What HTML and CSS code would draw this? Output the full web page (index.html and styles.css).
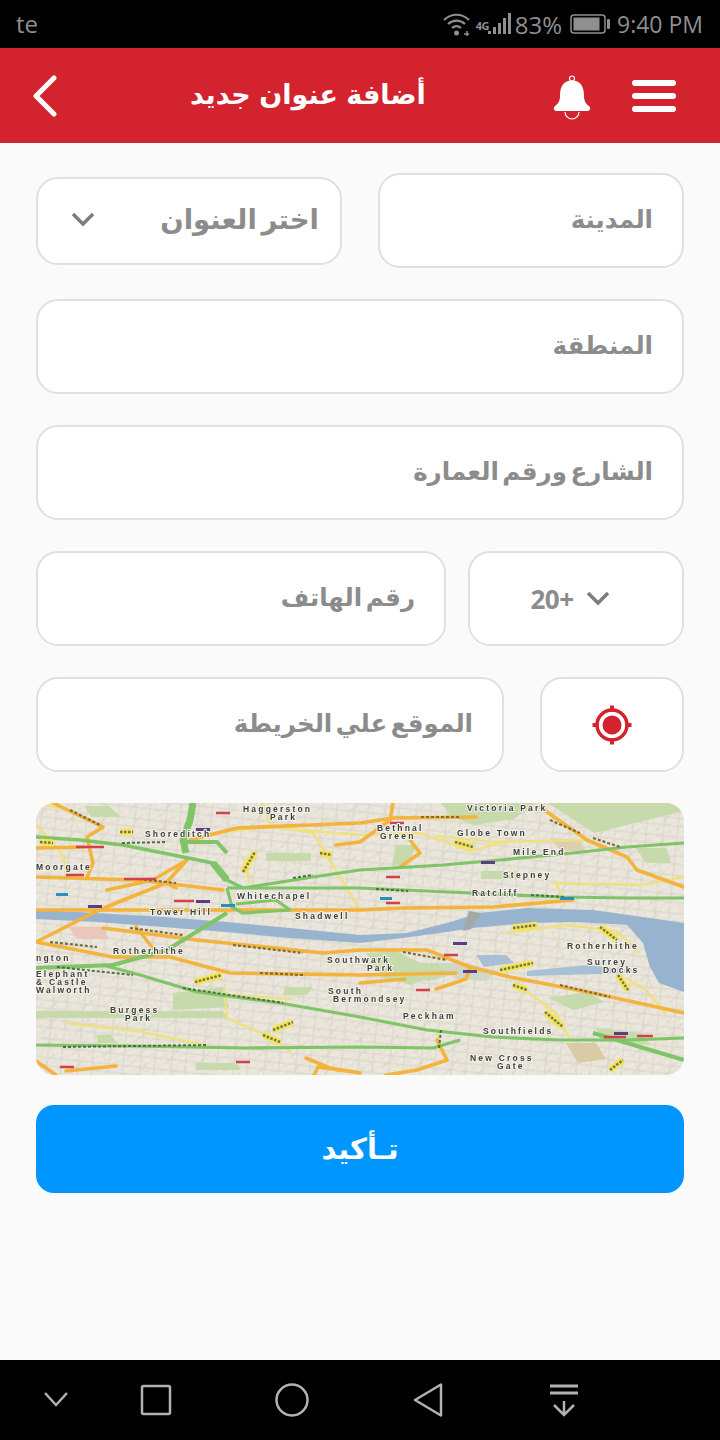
FILE: index.html
```html
<!DOCTYPE html>
<html lang="ar">
<head>
<meta charset="utf-8">
<title>أضافة عنوان جديد</title>
<link rel="stylesheet" href="styles.css">
</head>
<body>
<div class="page">
  <div class="status">
    <span class="carrier">te</span>
    <div class="status-right">
      <svg class="i-wifi" width="27" height="24" viewBox="0 0 27 24" fill="none" stroke="#8f8f8f" stroke-width="2.200"><path d="M1 8C8 1 19 1 26 8M5 12c5-4.500 12-4.500 17 0M9 16c3-2.500 6-2.500 9 0"/><circle cx="13.500" cy="21" r="2.500" fill="#8f8f8f" stroke="none"/><path d="M21 22h5M24 19v5" stroke-width="1.500"/></svg>
      <span class="net">4G</span>
      <svg class="i-sig" width="23" height="22" viewBox="0 0 23 22" fill="#8f8f8f"><rect x="0" y="18" width="3" height="3"/><rect x="5" y="14" width="3" height="7"/><rect x="10" y="10" width="3" height="11"/><rect x="15" y="5" width="3" height="16"/><rect x="20" y="0" width="3" height="21"/></svg>
      <span class="pct">83%</span>
      <svg class="i-bat" width="40" height="20" viewBox="0 0 40 20"><rect x="1" y="1" width="34" height="18" rx="3" fill="none" stroke="#8f8f8f" stroke-width="1.500"/><rect x="3.500" y="3.500" width="26" height="13" fill="#8f8f8f"/><rect x="37" y="5" width="3" height="10" rx="1" fill="#8f8f8f"/></svg>
      <span class="time">9:40 PM</span>
    </div>
  </div>

  <header class="topbar">
    <svg class="back" width="24" height="42" viewBox="0 0 24 42" fill="none" stroke="#fff" stroke-width="5" stroke-linecap="round" stroke-linejoin="round"><path d="M21 3 3 21l18 18"/></svg>
    <h1 class="title">أضافة عنوان جديد</h1>
    <svg class="bell" width="38" height="46" viewBox="0 0 38 46"><circle cx="19" cy="3.500" r="2.500" fill="none" stroke="#fff" stroke-width="1.200"/><path d="M19 5.500C10 5.500 7 12 7 21c0 5-2 8-5 10-2 1.500-1.500 5 1.500 5h31c3 0 3.500-3.500 1.500-5-3-2-5-5-5-10 0-9-3-15.500-12-15.500Z" fill="#fff"/><path d="M12 37a7 7 0 0 0 14 0" fill="none" stroke="#fff" stroke-width="1.200"/></svg>
    <div class="burger"><span></span><span></span><span></span></div>
  </header>

  <main class="form">
    <div class="row">
      <div class="field select-box"><svg class="chev" width="24" height="15" viewBox="0 0 24 15" fill="none" stroke="#7d7d7d" stroke-width="3.500"><path d="M2 2l10 10L22 2"/></svg><span class="label label-lg" dir="rtl">اختر العنوان</span></div>
      <div class="field city"><span class="label" dir="rtl">المدينة</span></div>
    </div>
    <div class="field"><span class="label" dir="rtl">المنطقة</span></div>
    <div class="field"><span class="label" dir="rtl">الشارع ورقم العمارة</span></div>
    <div class="row row-tight">
      <div class="field grow"><span class="label" dir="rtl">رقم الهاتف</span></div>
      <div class="field code"><span class="label label-num">20+</span><svg class="chev" width="24" height="15" viewBox="0 0 24 15" fill="none" stroke="#7d7d7d" stroke-width="3.500"><path d="M2 2l10 10L22 2"/></svg></div>
    </div>
    <div class="row">
      <div class="field grow"><span class="label" dir="rtl">الموقع علي الخريطة</span></div>
      <div class="field locate"><svg width="42" height="42" viewBox="0 0 42 42"><circle cx="21" cy="21" r="15" fill="none" stroke="#d2232e" stroke-width="3.500"/><circle cx="21" cy="21" r="9.500" fill="#d2232e"/><path d="M21 1.500v6M21 34.500v6M1.500 21h6M34.500 21h6" stroke="#d2232e" stroke-width="4"/></svg></div>
    </div>

    <div class="map">
      <svg width="648" height="272" viewBox="0 0 648 272">
        <defs>
          <pattern id="streets" width="31" height="19" patternUnits="userSpaceOnUse" patternTransform="rotate(6)">
            <path d="M0 5h31M0 13h31M7 0v19M21 0v19M0 19 14 0" stroke="#c4bfb2" stroke-width=".8" fill="none"/>
          </pattern>
          <pattern id="streets2" width="23" height="13" patternUnits="userSpaceOnUse" patternTransform="rotate(-24)">
            <path d="M0 4h23M0 10h23M5 0v13M16 0v13" stroke="#d0ccbf" stroke-width=".7" fill="none"/>
          </pattern>
          <filter id="soft"><feGaussianBlur stdDeviation=".6"/></filter>
          <filter id="softer"><feGaussianBlur stdDeviation=".3"/></filter>
        </defs>
        <g filter="url(#soft)">
          <rect width="648" height="272" fill="#ebe7dc"/>
          <rect width="648" height="272" fill="url(#streets2)" opacity=".45"/>
          <rect width="648" height="272" fill="url(#streets)" opacity=".55"/>
          <g fill="#c6daab">
            <path d="M405 0h95l-22 16-40 6-22-8Z"/>
            <path d="M512 0h136v8l-90 22Z"/>
            <path d="M48 3h25l12 11H55Z"/>
            <path d="M137 190l50-6 6 20-56 3Z"/>
            <path d="M0 208H187l4 7H0Z"/>
            <path d="M330 150l30-2 45 22-30 12-30-8Z"/>
            <path d="M373 160h30l20 10-30 8-20-4Z"/>
            <path d="M512 195l40-6 16 10-30 8Z"/>
            <path d="M249 184h28l-6 8h-24Z"/>
            <path d="M230 50h45v8h-45Z"/>
            <path d="M445 68h35l5 8h-40Z"/>
            <path d="M560 225l45 5 10 12-50-5Z"/>
            <path d="M60 232h15l6 8H62Z"/>
            <path d="M160 260h40l5 7h-45Z"/>
            <path d="M600 45h30l5 15h-25Z"/>
            <path d="M360 42h20l-8 20h-16Z"/>
          </g>
          <path d="M32 124h35l6 12H42Z" fill="#e9c7bd"/>
          <path d="M530 240h30l10 16-28 4Z" fill="#d8cba6"/>
          <path d="M514 35l30 2 6 12-26-2Z" fill="#dccfae"/>
          <path d="M0 107 61 110 127 114 191 119 254 125 324 132 371 130 411 120 444 110 491 105 557 107 607 114 648 120V189L623 180 614 164 607 140 591 122 541 119 491 120 437 125 411 129 367 135 324 140 254 135 191 129 127 124 61 119 0 116Z" fill="#97b3ce"/>
          <path d="M491 168 551 162 601 168 565 171 491 173Z" fill="#a9c0d4"/>
          <path d="M440 152h30l8 8-30 4Z" fill="#a9c0d4"/>
          <path d="M445 110l-10 16-8 2 6-20Z" fill="#a3a8a8"/>
          <path d="M400 160h30l30 8-10 10-30-2Z" fill="#cfd8c4"/>

          <g fill="none" stroke="#efe083" stroke-width="2.500" stroke-linejoin="round">
            <path d="M227 0l7 22 43 8 47 77"/>
            <path d="M0 22 18 40 28 55 30 70"/>
            <path d="M160 32l70-8 94 8 60-2 50 18 40-10"/>
            <path d="M208 55l6 25"/>
            <path d="M188 185l3 30 50 22 14 12"/>
            <path d="M30 220l70 8 70 14"/>
            <path d="M166 190l60 4 30 2"/>
            <path d="M515 80l90 2 43-8"/>
            <path d="M520 80l10 20M470 130l60-8 50 6 24 22"/>
            <path d="M480 180l40 30 15 28"/>
            <path d="M590 175l20 12 20 24"/>
            <path d="M400 33l60 6 90-2"/>
            <path d="M401 225l3 24"/>
            <path d="M0 0l30 6"/>
          </g>
          <g fill="none" stroke="#f3b33d" stroke-width="3.600" stroke-linejoin="round" stroke-linecap="round">
            <path d="M154 37 201 25 324 20 357 15 440 14"/>
            <path d="M17 0 67 24 51 34 57 60 51 74"/>
            <path d="M0 45 47 44"/>
            <path d="M0 74 101 77 187 87"/>
            <path d="M71 87 117 77 151 57 130 80 80 100 57 110 0 139"/>
            <path d="M0 107H170L324 107 367 105 457 104 537 97"/>
            <path d="M0 139 77 154 134 154 194 170 324 172 420 170"/>
            <path d="M67 125 161 137 287 150 324 147 391 147 434 164 474 174 557 190 648 210"/>
            <path d="M100 124l20 25M130 80l10 5"/>
            <path d="M504 4 551 37 591 54 601 67 648 84"/>
            <path d="M374 37 384 50 364 64"/>
            <path d="M357 0 354 17 324 39 300 42"/>
            <path d="M401 237 411 257 381 267 350 272"/>
            <path d="M0 258l20 14M30 268l50-5"/>
            <path d="M270 255l24 10 30 5-42-6-4 8M324 180l45-4"/>
            <path d="M434 164l-4 12-30 10"/>
          </g>
          <g fill="none" stroke="#7fc466" stroke-width="3.200" stroke-linejoin="round">
            <path d="M157 0 154 17 147 37 150 50" stroke-width="7"/>
            <path d="M0 34 44 37 87 42 147 54 177 60 191 77 207 85" stroke-width="3.500"/>
            <path d="M177 60 191 77" stroke-width="7"/>
            <path d="M147 39H181L191 50" stroke-width="4"/>
            <path d="M207 85 277 74 324 67 407 62 464 57 537 50 591 44 648 40"/>
            <path d="M191 85H324L434 90 524 94 591 95 648 95"/>
            <path d="M191 85 196 104 207 110 254 107 240 97 200 101"/>
            <path d="M191 110 131 147 77 162 0 165" stroke-width="4"/>
            <path d="M67 162 104 172 161 189 244 200 324 214 391 227 457 234 524 237 591 237 648 235"/>
            <path d="M0 242 94 243 211 245 324 244 397 245 424 237"/>
            <path d="M557 230 648 257" stroke-width="4"/>
          </g>

          <g fill="none" stroke="#f2e55c" stroke-width="7">
            <path d="M84 29l13 0M207 69 219 49M284 50l12 2M4 39l13 1M159 179l27-7M237 227l20-8M227 232l17 7M419 39l18 5M564 124l17 13M582 172l10 15M477 182l14 5M509 209l18 15M574 267l13-10M477 125l24-3M464 167l33-7"/>
          </g>
          <g fill="none" stroke="#77734a" stroke-width="2.500" stroke-dasharray="2.500 1.500">
            <path d="M84 29l13 0M207 69 219 49M284 50l12 2M4 39l13 1M159 179l27-7M237 227l20-8M227 232l17 7M419 39l18 5M564 124l17 13M582 172l10 15M477 182l14 5M509 209l18 15M574 267l13-10M477 125l24-3M464 167l33-7"/>
          </g>
          <g fill="none" stroke="#7a6c3a" stroke-width="2.200" stroke-dasharray="3 2">
            <path d="M34 7 64 22M94 125 147 132M197 142 267 150M14 139 61 144M224 170 267 172M514 17 544 30M557 35 584 44M524 182 574 194M367 149 411 157M103 76 140 80M385 14h40"/>
          </g>
          <g fill="none" stroke="#4c7040" stroke-width="2" stroke-dasharray="3 2">
            <path d="M21 164 97 172M147 185 247 200M27 244 171 242M86 40 131 39M257 75 277 72M340 86 372 88M495 92 530 94M405 227 403 245"/>
          </g>

          <g fill="none" stroke="#d4404a" stroke-width="2.500">
            <path d="M40 44h28M30 72h18M88 76h32M138 98h20M354 20h14M180 10h14M568 234h22M601 233h16M380 187h14M408 152h14M350 74h14M350 100h14M200 259h14M24 264h14"/>
          </g>
          <g fill="#5a3d86"><rect x="160" y="25" width="14" height="3"/><rect x="52" y="102" width="14" height="3"/><rect x="160" y="97" width="14" height="3"/><rect x="417" y="139" width="14" height="3"/><rect x="427" y="167" width="14" height="3"/><rect x="445" y="58" width="14" height="3"/><rect x="578" y="229" width="14" height="3"/></g>
          <g fill="#2a8fc0"><rect x="185" y="101" width="14" height="3"/><rect x="524" y="94" width="14" height="3"/><rect x="344" y="94" width="12" height="3"/><rect x="20" y="90" width="12" height="3"/></g>
        </g>
        <g class="map-labels" filter="url(#softer)">
          <text x="207" y="9">Haggerston</text>
          <text x="234" y="17">Park</text>
          <text x="109" y="34">Shoreditch</text>
          <text x="0" y="67">Moorgate</text>
          <text x="201" y="96">Whitechapel</text>
          <text x="114" y="112">Tower Hill</text>
          <text x="259" y="116">Shadwell</text>
          <text x="77" y="151">Rotherhithe</text>
          <text x="0" y="158">ngton</text>
          <text x="0" y="174">Elephant</text>
          <text x="0" y="182">&amp; Castle</text>
          <text x="0" y="190">Walworth</text>
          <text x="74" y="210">Burgess</text>
          <text x="89" y="218">Park</text>
          <text x="291" y="160">Southwark</text>
          <text x="331" y="168">Park</text>
          <text x="292" y="191">South</text>
          <text x="297" y="199">Bermondsey</text>
          <text x="431" y="8">Victoria Park</text>
          <text x="341" y="28">Bethnal</text>
          <text x="344" y="36">Green</text>
          <text x="421" y="33">Globe Town</text>
          <text x="477" y="52">Mile End</text>
          <text x="467" y="75">Stepney</text>
          <text x="436" y="93">Ratcliff</text>
          <text x="531" y="146">Rotherhithe</text>
          <text x="551" y="162">Surrey</text>
          <text x="567" y="170">Docks</text>
          <text x="367" y="216">Peckham</text>
          <text x="447" y="231">Southfields</text>
          <text x="434" y="258">New Cross</text>
          <text x="461" y="266">Gate</text>
        </g>
      </svg>
    </div>

    <button class="confirm" dir="rtl">تـأكيد</button>
  </main>

  <nav class="softnav">
    <svg class="nav-first" width="36" height="36" viewBox="0 0 36 36" fill="none" stroke="#b2b2b2" stroke-width="2.500"><path d="M7 11l11 12 11-12"/></svg>
    <svg width="36" height="36" viewBox="0 0 36 36" fill="none" stroke="#b2b2b2" stroke-width="2.500" stroke-linejoin="round"><rect x="4" y="4" width="28" height="28" rx="1.500"/></svg>
    <svg width="36" height="36" viewBox="0 0 36 36" fill="none" stroke="#b2b2b2" stroke-width="2.500"><circle cx="18" cy="18" r="15.500"/></svg>
    <svg width="36" height="36" viewBox="0 0 36 36" fill="none" stroke="#b2b2b2" stroke-width="2.500" stroke-linejoin="round"><path d="M31 2.500V33.500L5 18Z"/></svg>
    <svg width="36" height="36" viewBox="0 0 36 36" fill="none" stroke="#b2b2b2" stroke-width="3"><path d="M4 4h28M4 11h28"/><path d="M18 19v14M8 23l10 10 10-10" stroke-width="2.500"/></svg>
  </nav>
</div>
</body>
</html>
```
FILE: styles.css
```css
* { box-sizing: border-box; }
html, body { margin: 0; padding: 0; }
body { background: #fafafa; font-family: "Open Sans", "DejaVu Sans", sans-serif; }
.page { width: 720px; height: 1440px; display: flex; flex-direction: column; overflow: hidden; }

.status { height: 48px; background: #000; color: #8f8f8f; display: flex; align-items: center; justify-content: space-between; padding: 0 17px 0 16px; font-size: 24px; font-family: "Open Sans", sans-serif; flex: none; }
.carrier { line-height: 1; }
.status-right { display: flex; align-items: center; }
.i-wifi { margin-right: 6px; }
.net { font-size: 11px; font-weight: 700; align-self: flex-start; margin-top: 10px; width: 13px; margin-right: -1px; letter-spacing: -.5px; }
.i-sig { margin-right: 4px; }
.pct { margin-right: 8px; }
.i-bat { margin-right: 7px; }
.time { font-size: 23px; }

.topbar { height: 95px; background: #d2232e; display: flex; align-items: center; padding: 0 44px 0 33px; flex: none; }
.title { margin: 0 0 2px 133px; font-size: 27px; line-height: 1; font-weight: 700; color: #fff; direction: rtl; font-family: "DejaVu Sans", sans-serif; white-space: nowrap; word-spacing: -1px; }
.bell { margin-left: auto; margin-right: 41px; margin-top: 4px; }
.burger { width: 44px; display: flex; flex-direction: column; gap: 7px; }
.burger span { display: block; height: 6px; border-radius: 3px; background: #fff; }

.form { display: flex; flex-direction: column; gap: 31px; padding: 30px 36px 0; flex: 1; }
.row { display: flex; gap: 36px; align-items: center; }
.row-tight { gap: 22px; }
.field { height: 95px; width: 100%; background: #fff; border: 2px solid #e0e0e0; border-radius: 22px; display: flex; align-items: center; justify-content: flex-end; padding: 0 29px 3px; }
.row .field { flex: none; }
.row .grow { flex: 1; width: auto; }
.label { font-family: "DejaVu Sans", sans-serif; font-size: 24.500px; font-weight: 700; color: #8c8c8c; white-space: nowrap; word-spacing: -5px; }
.label-lg { font-size: 27.500px; }
.label-num { font-family: "Open Sans", sans-serif; font-size: 26px; word-spacing: 0; letter-spacing: -.5px; }
.select-box { width: 306px; height: 88px; justify-content: space-between; padding: 0 21px 3px 33px; }
.city { width: 306px; }
.code { width: 216px; justify-content: center; gap: 12px; padding: 0 12px 0 0; }
.locate { width: 144px; justify-content: center; padding: 0; }

.map { height: 272px; border-radius: 18px; overflow: hidden; flex: none; }
.map svg { display: block; }
.map-labels text { font-family: "Liberation Sans", sans-serif; font-size: 8.500px; font-weight: 700; letter-spacing: 2.200px; fill: #3d3d3d; stroke: #f4f2ea; stroke-width: 2px; paint-order: stroke; }

.confirm { height: 88px; margin-top: -1px; border: 0; border-radius: 18px; background: #0096ff; color: #fff; font-family: "DejaVu Sans", sans-serif; font-size: 29px; font-weight: 700; flex: none; padding: 0; }

.softnav { height: 80px; background: #000; display: flex; align-items: center; gap: 100px; padding-left: 38px; flex: none; }
.nav-first { margin-right: -36px; }
```
